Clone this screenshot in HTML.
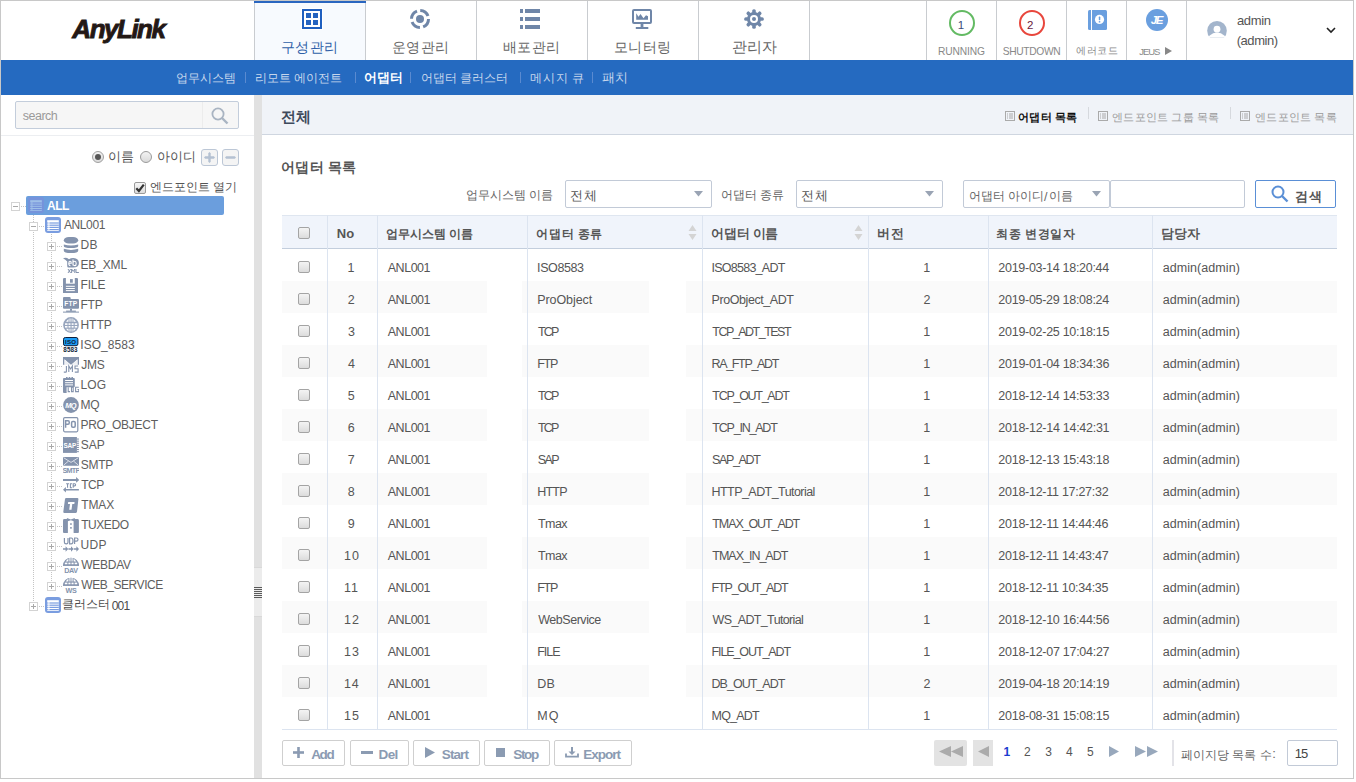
<!DOCTYPE html>
<html><head><meta charset="utf-8"><title>AnyLink</title><style>
*{margin:0;padding:0}
html,body{width:1356px;height:782px;overflow:hidden;background:#fff;font-family:"Liberation Sans", sans-serif}
#root{position:relative;width:1356px;height:782px}
#root div{position:absolute;white-space:nowrap}
svg{display:block}
.k{-webkit-text-stroke:0.25px currentColor}
</style></head>
<body><div id="root">
<div style="left:0px;top:0px;width:1354px;height:1px;background:#c8c8c8;"></div>
<div style="left:0px;top:0px;width:1px;height:779px;background:#c8c8c8;"></div>
<div style="left:1353px;top:0px;width:1px;height:779px;background:#c8c8c8;"></div>
<div style="left:0px;top:778px;width:1354px;height:1px;background:#c8c8c8;"></div>
<div style="left:72.35px;top:16px;font-size:26px;line-height:26px;color:#231815;font-weight:bold;font-style:italic;letter-spacing:-1.49px;-webkit-text-stroke:0.9px #231815;">AnyLink</div>
<div style="left:254px;top:1px;width:112px;height:59px;background:#f7fafe;box-sizing:border-box;border-left:1px solid #c9ccd0;border-right:1px solid #c9ccd0"></div>
<div style="left:254px;top:1px;width:112px;height:2px;background:#2a66c0;"></div>
<div style="left:301px;top:8px"><svg width="22" height="22" viewBox="-1 -1 22 22"><rect x="-1" y="-1" width="22" height="22" fill="#fff"/><rect x="1" y="1" width="18" height="18" fill="none" stroke="#1f5fbf" stroke-width="2"/><rect x="4" y="4" width="5" height="5" fill="#2563bf"/><rect x="11" y="4" width="5" height="5" fill="#2563bf"/><rect x="4" y="11" width="5" height="5" fill="#2563bf"/><rect x="11" y="11" width="5" height="5" fill="#2563bf"/></svg></div>
<div class="k" style="left:280.85px;top:38px;font-size:19px;line-height:19px;color:#2e5fa8;">구성관리</div>
<div style="left:476px;top:1px;width:1px;height:59px;background:#c9ccd0;"></div>
<div style="left:410px;top:9px"><svg width="20" height="20" viewBox="0 0 20 20"><circle cx="10" cy="10" r="8.5" fill="none" stroke="#6f86a8" stroke-width="3" stroke-dasharray="10.05 3.3"/><circle cx="10" cy="10" r="4" fill="#6f86a8"/></svg></div>
<div class="k" style="left:391.85px;top:38px;font-size:19px;line-height:19px;color:#666;">운영관리</div>
<div style="left:587px;top:1px;width:1px;height:59px;background:#c9ccd0;"></div>
<div style="left:520px;top:9px"><svg width="20" height="20" viewBox="0 0 20 20"><rect x="0" y="0" width="3" height="4" fill="#6f86a8"/><rect x="5" y="0" width="15" height="4" fill="#6f86a8"/><rect x="0" y="8" width="3" height="4" fill="#6f86a8"/><rect x="5" y="8" width="15" height="4" fill="#6f86a8"/><rect x="0" y="16" width="3" height="4" fill="#6f86a8"/><rect x="5" y="16" width="15" height="4" fill="#6f86a8"/></svg></div>
<div class="k" style="left:502.85px;top:38px;font-size:19px;line-height:19px;color:#666;">배포관리</div>
<div style="left:698px;top:1px;width:1px;height:59px;background:#c9ccd0;"></div>
<div style="left:632px;top:9px"><svg width="20" height="20" viewBox="0 0 20 20"><rect x="1" y="1" width="18" height="13" rx="1" fill="none" stroke="#6f86a8" stroke-width="2"/><path d="M4.2 4.2 L6.5 7.8 L8.5 5 L11.5 9.3 L14 6.2 L16 7.3 V10.7 H4.2Z" fill="#6f86a8"/><rect x="8.6" y="14.5" width="2.8" height="3.5" fill="#6f86a8"/><rect x="3.8" y="18" width="12.5" height="2" fill="#6f86a8"/></svg></div>
<div class="k" style="left:613.85px;top:38px;font-size:19px;line-height:19px;color:#666;">모니터링</div>
<div style="left:809px;top:1px;width:1px;height:59px;background:#c9ccd0;"></div>
<div style="left:744px;top:9px"><svg width="20" height="20" viewBox="0 0 20 20"><g fill="#6f86a8"><circle cx="10" cy="10" r="7"/><g id="th"><rect x="8.2" y="0.2" width="3.6" height="5" rx="1.6"/><rect x="8.2" y="14.8" width="3.6" height="5" rx="1.6"/></g><use href="#th" transform="rotate(45 10 10)"/><use href="#th" transform="rotate(90 10 10)"/><use href="#th" transform="rotate(135 10 10)"/></g><circle cx="10" cy="10" r="4" fill="#fff"/><circle cx="10" cy="10" r="2" fill="#6f86a8"/></svg></div>
<div class="k" style="left:731.55px;top:38px;font-size:19.5px;line-height:19.5px;color:#666;">관리자</div>
<div style="left:926px;top:1px;width:1px;height:59px;background:#c9ccd0;"></div>
<div style="left:996px;top:1px;width:1px;height:59px;background:#c9ccd0;"></div>
<div style="left:1066px;top:1px;width:1px;height:59px;background:#c9ccd0;"></div>
<div style="left:1126px;top:1px;width:1px;height:59px;background:#c9ccd0;"></div>
<div style="left:1186px;top:1px;width:1px;height:59px;background:#c9ccd0;"></div>
<div style="left:949px;top:10px;width:22px;height:22px;border:2px solid #63ba63;border-radius:50%"></div>
<div style="left:957.82px;top:20px;font-size:11.5px;line-height:11.5px;color:#3a4a7a;">1</div>
<div style="left:1019px;top:10px;width:22px;height:22px;border:2px solid #e8463c;border-radius:50%"></div>
<div style="left:1026.92px;top:20px;font-size:11.5px;line-height:11.5px;color:#6a1a40;">2</div>
<div style="left:937.96px;top:47px;font-size:10.25px;line-height:10.25px;color:#888;letter-spacing:-0.13px;">RUNNING</div>
<div style="left:1002.74px;top:47px;font-size:10.25px;line-height:10.25px;color:#888;letter-spacing:-0.34px;">SHUTDOWN</div>
<svg style="position:absolute;left:1088px;top:10px" width="19" height="20" viewBox="0 0 19 20"><path d="M1.5 0H3V20H1.5Q0 20 0 18.5V1.5Q0 0 1.5 0Z" fill="#6a9fdf"/><path d="M4 0H17.5Q19 0 19 1.5V18.5Q19 20 17.5 20H4Z" fill="#6a9fdf"/><circle cx="11.5" cy="9.4" r="4.6" fill="#fff"/><rect x="10.8" y="6.6" width="1.5" height="3.6" rx="0.6" fill="#6a9fdf"/><rect x="10.8" y="11.1" width="1.5" height="1.4" fill="#6a9fdf"/></svg>
<div class="k" style="left:1075.62px;top:44px;font-size:13.75px;line-height:13.75px;color:#888;">에러코드</div>
<div style="left:1146px;top:9px;width:22px;height:22px;border-radius:50%;background:#6a9fdf"></div>
<div style="left:1150.73px;top:15px;font-size:11.5px;line-height:11.5px;color:#fff;font-weight:bold;font-style:italic;letter-spacing:-1.34px;">JE</div>
<div style="left:1139.15px;top:47px;font-size:9.5px;line-height:9.5px;color:#888;letter-spacing:-1px;">JEUS</div>
<svg style="position:absolute;left:1165px;top:47px" width="7" height="8" viewBox="0 0 7 8"><path d="M0 0L7 4L0 8Z" fill="#888"/></svg>
<svg style="position:absolute;left:1207px;top:21px" width="20" height="18" viewBox="0 0 20 18"><defs><clipPath id="cav"><rect x="0" y="0" width="20" height="16.6"/></clipPath></defs><g clip-path="url(#cav)"><circle cx="10" cy="9.8" r="9.8" fill="#a3b5cc"/><circle cx="10" cy="8.2" r="3.4" fill="#fff"/><circle cx="10" cy="21.6" r="10.2" fill="#fff"/></g></svg>
<div style="left:1236.95px;top:14px;font-size:13px;line-height:13px;color:#555;letter-spacing:-0.33px;">admin</div>
<div style="left:1236.69px;top:34px;font-size:13px;line-height:13px;color:#555;letter-spacing:-0.44px;">(admin)</div>
<svg style="position:absolute;left:1326px;top:27px" width="10" height="7" viewBox="0 0 10 7"><path d="M1 1L5 5L9 1" stroke="#222" stroke-width="1.6" fill="none"/></svg>
<div style="left:1px;top:60px;width:1352px;height:35px;background:#256ac0;"></div>
<div class="k" style="left:175.67px;top:70px;font-size:16.25px;line-height:16.25px;color:#c6d6ec;">업무시스템</div>
<div class="k" style="left:255.17px;top:70px;font-size:16.25px;line-height:16.25px;color:#c6d6ec;">리모트 에이전트</div>
<div class="k" style="left:363.92px;top:71px;font-size:16.75px;line-height:16.75px;color:#fff;font-weight:bold;">어댑터</div>
<div class="k" style="left:420.87px;top:70px;font-size:16.25px;line-height:16.25px;color:#c6d6ec;">어댑터 클러스터</div>
<div class="k" style="left:530.15px;top:70px;font-size:16.5px;line-height:16.5px;color:#c6d6ec;">메시지 큐</div>
<div class="k" style="left:602px;top:70px;font-size:17px;line-height:17px;color:#c6d6ec;">패치</div>
<div style="left:245px;top:72px;width:1px;height:11px;background:#5a8ad0;"></div>
<div style="left:355px;top:72px;width:1px;height:11px;background:#5a8ad0;"></div>
<div style="left:410px;top:72px;width:1px;height:11px;background:#5a8ad0;"></div>
<div style="left:520px;top:72px;width:1px;height:11px;background:#5a8ad0;"></div>
<div style="left:592px;top:72px;width:1px;height:11px;background:#5a8ad0;"></div>
<div style="left:15px;top:101px;width:222px;height:26px;border:1px solid #c3cddb;background:#f6f6f6;border-radius:2px;"></div>
<div style="left:202px;top:102px;width:1px;height:26px;background:#ececec;"></div>
<div style="left:22.65px;top:110px;font-size:12.5px;line-height:12.5px;color:#9a9a9a;letter-spacing:-0.47px;">search</div>
<svg style="position:absolute;left:211px;top:107px" width="18" height="18" viewBox="0 0 18 18"><circle cx="7" cy="7" r="5.6" fill="none" stroke="#a9b4c2" stroke-width="1.8"/><path d="M11 11L16.5 16.5" stroke="#a9b4c2" stroke-width="2.4"/></svg>
<div style="left:1px;top:135px;width:253px;height:1px;background:#eceef1;"></div>
<div style="left:92px;top:151px;width:10px;height:10px;border:1px solid #a0a0a0;border-radius:50%;background:linear-gradient(#f3f3f3,#dadada)"></div>
<div style="left:95px;top:154px;width:6px;height:6px;border-radius:50%;background:#555"></div>
<div class="k" style="left:108.27px;top:149px;font-size:17.25px;line-height:17.25px;color:#555;">이름</div>
<div style="left:140px;top:151px;width:10px;height:10px;border:1px solid #9a9a9a;border-radius:50%;background:linear-gradient(#f3f3f3,#dadada)"></div>
<div class="k" style="left:156.62px;top:150px;font-size:16.75px;line-height:16.75px;color:#555;">아이디</div>
<div style="left:201px;top:149px;width:15px;height:15px;border:1px solid #bcc7d6;background:#f4f4f4;border-radius:3px;"></div>
<svg style="position:absolute;left:204px;top:152px" width="11" height="11" viewBox="0 0 11 11"><path d="M0 5.5 L1.2 4.3 H9.8 L11 5.5 L9.8 6.7 H1.2Z" fill="#b4c1d2"/><path d="M5.5 0 L6.7 1.2 V9.8 L5.5 11 L4.3 9.8 V1.2Z" fill="#b4c1d2"/></svg>
<div style="left:222px;top:149px;width:15px;height:15px;border:1px solid #bcc7d6;background:#f4f4f4;border-radius:3px;"></div>
<svg style="position:absolute;left:225px;top:152px" width="11" height="11" viewBox="0 0 11 11"><path d="M0 5.5 L1.2 4.3 H9.8 L11 5.5 L9.8 6.7 H1.2Z" fill="#b4c1d2"/></svg>
<div style="left:134px;top:182px;width:10px;height:10px;border:1px solid #9a9a9a;border-radius:2px;background:linear-gradient(#f6f6f6,#dcdcdc)"></div>
<svg style="position:absolute;left:135px;top:183px" width="10" height="10" viewBox="0 0 10 10"><path d="M1.3 5.2L3.9 8L8.8 1.6" stroke="#333" stroke-width="2.2" fill="none"/></svg>
<div class="k" style="left:150px;top:180px;font-size:16px;line-height:16px;color:#555;">엔드포인트 열기</div>
<div style="left:26px;top:196px;width:198px;height:19px;background:#6b9edd;border-radius:2px;"></div>
<div style="left:11px;top:202px;width:7px;height:7px;border:1px solid #d3d3d3;background:#fff;"></div><div style="left:13px;top:206px;width:5px;height:1px;background:#a8a8a8;"></div>
<div style="left:21px;top:206px;width:5px;height:1px;background-image:linear-gradient(90deg,#c4c4c4 50%, transparent 50%);background-size:2px 1px"></div>
<div style="left:28px;top:197px;opacity:0.35"><svg width="16" height="16" viewBox="0 0 16 16" ><rect x="0" y="0" width="16" height="16" rx="3" fill="#8a7fd8"/><rect x="2.2" y="3.2" width="11.6" height="10.6" fill="#fff"/><rect x="4.4" y="5.4" width="9.4" height="1.2" fill="#8a7fd8"/><rect x="4.4" y="7.6" width="9.4" height="1.2" fill="#8a7fd8"/><rect x="4.4" y="9.8" width="9.4" height="1.2" fill="#8a7fd8"/><rect x="4.4" y="12" width="9.4" height="1" fill="#8a7fd8"/><rect x="2.2" y="5.4" width="1.2" height="1.2" fill="#8a7fd8"/><rect x="2.2" y="7.6" width="1.2" height="1.2" fill="#8a7fd8"/><rect x="2.2" y="9.8" width="1.2" height="1.2" fill="#8a7fd8"/><rect x="2.2" y="12" width="1.2" height="1" fill="#8a7fd8"/></svg></div>
<div style="left:46.9px;top:200px;font-size:12px;line-height:12px;color:#fff;font-weight:bold;letter-spacing:-0.43px;">ALL</div>
<div style="left:33px;top:215px;width:1px;height:7px;background-image:linear-gradient(#c4c4c4 50%, transparent 50%);background-size:1px 2px"></div>
<div style="left:29px;top:222px;width:7px;height:7px;border:1px solid #d3d3d3;background:#fff;"></div><div style="left:31px;top:226px;width:5px;height:1px;background:#a8a8a8;"></div>
<div style="left:39px;top:226px;width:6px;height:1px;background-image:linear-gradient(90deg,#c4c4c4 50%, transparent 50%);background-size:2px 1px"></div>
<div style="left:45px;top:217px"><svg width="16" height="16" viewBox="0 0 16 16" ><rect x="0" y="0" width="16" height="16" rx="3" fill="#7a9de0"/><rect x="2.2" y="3.2" width="11.6" height="10.6" fill="#fff"/><rect x="4.4" y="5.4" width="9.4" height="1.2" fill="#7a9de0"/><rect x="4.4" y="7.6" width="9.4" height="1.2" fill="#7a9de0"/><rect x="4.4" y="9.8" width="9.4" height="1.2" fill="#7a9de0"/><rect x="4.4" y="12" width="9.4" height="1" fill="#7a9de0"/><rect x="2.2" y="5.4" width="1.2" height="1.2" fill="#7a9de0"/><rect x="2.2" y="7.6" width="1.2" height="1.2" fill="#7a9de0"/><rect x="2.2" y="9.8" width="1.2" height="1.2" fill="#7a9de0"/><rect x="2.2" y="12" width="1.2" height="1" fill="#7a9de0"/></svg></div>
<div style="left:63.88px;top:219px;font-size:12px;line-height:12px;color:#5e5e5e;letter-spacing:-0.37px;">ANL001</div>
<div style="left:33px;top:232px;width:1px;height:370px;background-image:linear-gradient(#c4c4c4 50%, transparent 50%);background-size:1px 2px"></div>
<div style="left:51px;top:234px;width:1px;height:356px;background-image:linear-gradient(#c4c4c4 50%, transparent 50%);background-size:1px 2px"></div>
<div style="left:47px;top:242px;width:7px;height:7px;border:1px solid #d3d3d3;background:#fff;"></div><div style="left:49px;top:246px;width:5px;height:1px;background:#a8a8a8;"></div><div style="left:51px;top:244px;width:1px;height:5px;background:#a8a8a8;"></div>
<div style="left:57px;top:246px;width:5px;height:1px;background-image:linear-gradient(90deg,#c4c4c4 50%, transparent 50%);background-size:2px 1px"></div>
<div style="left:63px;top:237px;width:16px;height:16px"><svg width="16" height="16" viewBox="0 0 16 16" ><rect x="0.8" y="0" width="14.4" height="6.4" rx="5" ry="3.2" fill="#8493ad"/><path d="M0.8 7.4 Q8 9.6 15.2 7.4 V9 Q15.2 11 8 11 Q0.8 11 0.8 9Z" fill="#8493ad"/><path d="M0.8 11.8 Q8 14 15.2 11.8 V13.7 Q15.2 16 8 16 Q0.8 16 0.8 13.7Z" fill="#8493ad"/></svg></div>
<div style="left:80.42px;top:239px;font-size:12px;line-height:12px;color:#5e5e5e;letter-spacing:0.35px;">DB</div>
<div style="left:47px;top:262px;width:7px;height:7px;border:1px solid #d3d3d3;background:#fff;"></div><div style="left:49px;top:266px;width:5px;height:1px;background:#a8a8a8;"></div><div style="left:51px;top:264px;width:1px;height:5px;background:#a8a8a8;"></div>
<div style="left:57px;top:266px;width:5px;height:1px;background-image:linear-gradient(90deg,#c4c4c4 50%, transparent 50%);background-size:2px 1px"></div>
<div style="left:63px;top:257px;width:16px;height:16px"><svg width="16" height="16" viewBox="0 0 16 16" ><path d="M0 1.3 Q3 0 6 2.2 Q8 0.8 10.5 1 Q15.9 1.3 15.9 6 Q15.9 10.5 10 10.5 H5.5 Q4.2 10.5 4.2 9 V4.5 Q2.5 2.5 0 1.3Z" fill="#8493ad"/><path d="M8.3 6.2 H5.8 Q5.9 4.3 7 4.3 Q8.3 4.3 8.3 6.2Z M5.8 6.4 Q5.8 8.6 7.4 8.6" stroke="#fff" stroke-width="1.1" fill="none"/><path d="M10 2.5 V8.6 M10 5.5 Q10.5 4.3 11.8 4.3 Q13.2 4.3 13.2 6.4 Q13.2 8.6 11.8 8.6 Q10.5 8.6 10 7.4" stroke="#fff" stroke-width="1.1" fill="none"/><path d="M5 12 L7.6 16 M7.6 12 L5 16 M8.6 16 V12 L10.2 14.4 L11.8 12 V16 M13 12 V15.5 H15.9" stroke="#8493ad" stroke-width="1" fill="none"/></svg></div>
<div style="left:80.42px;top:259px;font-size:12px;line-height:12px;color:#5e5e5e;letter-spacing:-0.13px;">EB_XML</div>
<div style="left:47px;top:282px;width:7px;height:7px;border:1px solid #d3d3d3;background:#fff;"></div><div style="left:49px;top:286px;width:5px;height:1px;background:#a8a8a8;"></div><div style="left:51px;top:284px;width:1px;height:5px;background:#a8a8a8;"></div>
<div style="left:57px;top:286px;width:5px;height:1px;background-image:linear-gradient(90deg,#c4c4c4 50%, transparent 50%);background-size:2px 1px"></div>
<div style="left:63px;top:278px;width:16px;height:16px"><svg width="16" height="16" viewBox="0 0 16 16" ><path d="M0.8 0 H14.2 L15 0.8 V15 H0 V0.8Z" fill="#8493ad"/><rect x="2.9" y="0" width="8.9" height="5.7" fill="#fff"/><rect x="7" y="1.1" width="2.8" height="3.6" fill="#8493ad"/><rect x="2.9" y="7.8" width="8.9" height="1" fill="#fff"/><rect x="2.9" y="10" width="8.9" height="1" fill="#fff"/><rect x="2.9" y="12.1" width="8.9" height="1" fill="#fff"/></svg></div>
<div style="left:80.42px;top:279px;font-size:12px;line-height:12px;color:#5e5e5e;letter-spacing:-0.11px;">FILE</div>
<div style="left:47px;top:302px;width:7px;height:7px;border:1px solid #d3d3d3;background:#fff;"></div><div style="left:49px;top:306px;width:5px;height:1px;background:#a8a8a8;"></div><div style="left:51px;top:304px;width:1px;height:5px;background:#a8a8a8;"></div>
<div style="left:57px;top:306px;width:5px;height:1px;background-image:linear-gradient(90deg,#c4c4c4 50%, transparent 50%);background-size:2px 1px"></div>
<div style="left:63px;top:297px;width:16px;height:16px"><svg width="16" height="16" viewBox="0 0 16 16" ><path d="M0 1 Q0 0 1 0 H6.5 Q7.7 0 7.7 1.2 V2 H15 Q16 2 16 3 V10.8 Q16 11.8 15 11.8 H1 Q0 11.8 0 10.8Z" fill="#8493ad"/><text x="7.8" y="8.9" font-size="6.6" font-weight="bold" fill="#fff" text-anchor="middle" font-family="Liberation Sans" letter-spacing="0.2">FTP</text><rect x="7" y="11.8" width="2" height="2" fill="#8493ad"/><rect x="3.1" y="13.6" width="9.8" height="1.2" fill="#8493ad"/><rect x="0" y="14.6" width="16" height="1" fill="#8493ad"/></svg></div>
<div style="left:80.42px;top:299px;font-size:12px;line-height:12px;color:#5e5e5e;letter-spacing:-0.17px;">FTP</div>
<div style="left:47px;top:322px;width:7px;height:7px;border:1px solid #d3d3d3;background:#fff;"></div><div style="left:49px;top:326px;width:5px;height:1px;background:#a8a8a8;"></div><div style="left:51px;top:324px;width:1px;height:5px;background:#a8a8a8;"></div>
<div style="left:57px;top:326px;width:5px;height:1px;background-image:linear-gradient(90deg,#c4c4c4 50%, transparent 50%);background-size:2px 1px"></div>
<div style="left:63px;top:317px;width:16px;height:16px"><svg width="16" height="16" viewBox="0 0 16 16" ><defs><clipPath id="gc"><circle cx="8" cy="8" r="7.9"/></clipPath></defs><circle cx="8" cy="8" r="7.9" fill="#97a5bd"/><g clip-path="url(#gc)" fill="#fff"><rect x="2" y="6.3" width="2.5" height="1.6"/><rect x="5.5" y="6.3" width="2" height="1.6"/><rect x="8.6" y="6.3" width="2" height="1.6"/><rect x="11.7" y="6.3" width="2.5" height="1.6"/><rect x="2" y="9" width="2.5" height="1.6"/><rect x="5.5" y="9" width="2" height="1.6"/><rect x="8.6" y="9" width="2" height="1.6"/><rect x="11.7" y="9" width="2.5" height="1.6"/><path d="M3 4.8 L5.5 2 V4.8Z M6.5 4.8 V1.5 H7.5 V4.8Z M8.6 4.8 V1.5 H9.5 V4.8Z M10.5 4.8 V2 L13 4.8Z"/><path d="M3 11.8 L5.5 14.5 V11.8Z M6.5 11.8 V14.5 H7.5 V11.8Z M8.6 11.8 V14.5 H9.5 V11.8Z M10.5 11.8 V14.5 L13 11.8Z"/></g></svg></div>
<div style="left:80.42px;top:319px;font-size:12px;line-height:12px;color:#5e5e5e;">HTTP</div>
<div style="left:47px;top:342px;width:7px;height:7px;border:1px solid #d3d3d3;background:#fff;"></div><div style="left:49px;top:346px;width:5px;height:1px;background:#a8a8a8;"></div><div style="left:51px;top:344px;width:1px;height:5px;background:#a8a8a8;"></div>
<div style="left:57px;top:346px;width:5px;height:1px;background-image:linear-gradient(90deg,#c4c4c4 50%, transparent 50%);background-size:2px 1px"></div>
<div style="left:63px;top:337px;width:16px;height:16px"><svg width="16" height="16" viewBox="0 0 16 16" ><rect x="0.5" y="0.5" width="14.4" height="8.2" rx="1.8" fill="#1c9cf6" stroke="#0f1f3a" stroke-width="1"/><text x="7.7" y="7.2" font-size="6.2" font-weight="bold" fill="#0f1f3a" text-anchor="middle" font-family="Liberation Sans" letter-spacing="0.3">ISO</text><text x="7.5" y="15" font-size="6.3" font-weight="bold" fill="#0f1f3a" text-anchor="middle" font-family="Liberation Sans" letter-spacing="0.1">8583</text></svg></div>
<div style="left:80.29px;top:339px;font-size:12px;line-height:12px;color:#5e5e5e;letter-spacing:0.04px;">ISO_8583</div>
<div style="left:47px;top:362px;width:7px;height:7px;border:1px solid #d3d3d3;background:#fff;"></div><div style="left:49px;top:366px;width:5px;height:1px;background:#a8a8a8;"></div><div style="left:51px;top:364px;width:1px;height:5px;background:#a8a8a8;"></div>
<div style="left:57px;top:366px;width:5px;height:1px;background-image:linear-gradient(90deg,#c4c4c4 50%, transparent 50%);background-size:2px 1px"></div>
<div style="left:63px;top:357px;width:16px;height:16px"><svg width="16" height="16" viewBox="0 0 16 16" ><path d="M0 0H16V7.7H14.5V2.2L8 7.7L1.5 2.2V7.7H0Z" fill="#8493ad"/><path d="M1.5 1.6H14.5L8 7.3Z" fill="#8493ad"/><path d="M1.5 2.6V7.7H7.3Z M14.5 2.6V7.7H8.7Z" fill="#eef0f4"/><path d="M3.4 9 V14.4 Q3.4 15.1 2.7 15.1 H0.8 M5.8 15.1 V9 L7.6 12 L9.4 9 V15.1 M15.1 9 H12 V11.8 H15.1 V15.1 H11.8" stroke="#8493ad" stroke-width="1.1" fill="none"/></svg></div>
<div style="left:81.21px;top:359px;font-size:12px;line-height:12px;color:#5e5e5e;letter-spacing:-0.23px;">JMS</div>
<div style="left:47px;top:382px;width:7px;height:7px;border:1px solid #d3d3d3;background:#fff;"></div><div style="left:49px;top:386px;width:5px;height:1px;background:#a8a8a8;"></div><div style="left:51px;top:384px;width:1px;height:5px;background:#a8a8a8;"></div>
<div style="left:57px;top:386px;width:5px;height:1px;background-image:linear-gradient(90deg,#c4c4c4 50%, transparent 50%);background-size:2px 1px"></div>
<div style="left:63px;top:377px;width:16px;height:16px"><svg width="16" height="16" viewBox="0 0 16 16" ><rect x="0" y="1" width="11.8" height="9.2" rx="1" fill="#8493ad"/><path d="M0 9 H3.6 V16 H1 Q0 16 0 15Z" fill="#8493ad"/><rect x="3" y="0" width="1.6" height="1.2" fill="#8493ad"/><rect x="5.7" y="0" width="1.6" height="1.2" fill="#8493ad"/><rect x="8.4" y="0" width="1.6" height="1.2" fill="#8493ad"/><rect x="2.1" y="3" width="7.9" height="1" fill="#fff"/><rect x="2.1" y="5.2" width="7.9" height="1" fill="#fff"/><rect x="2.1" y="7.4" width="7.9" height="1" fill="#fff"/><path d="M5.2 10.2 V14.6 H7 M8.5 10.2 H10.2 V14.6 H8.5Z M15.8 10.2 H12.6 V14.6 H15.8 V12.5 H14.5" stroke="#8493ad" stroke-width="1.1" fill="none"/></svg></div>
<div style="left:80.42px;top:379px;font-size:12px;line-height:12px;color:#5e5e5e;letter-spacing:0.22px;">LOG</div>
<div style="left:47px;top:402px;width:7px;height:7px;border:1px solid #d3d3d3;background:#fff;"></div><div style="left:49px;top:406px;width:5px;height:1px;background:#a8a8a8;"></div><div style="left:51px;top:404px;width:1px;height:5px;background:#a8a8a8;"></div>
<div style="left:57px;top:406px;width:5px;height:1px;background-image:linear-gradient(90deg,#c4c4c4 50%, transparent 50%);background-size:2px 1px"></div>
<div style="left:63px;top:397px;width:16px;height:16px"><svg width="16" height="16" viewBox="0 0 16 16" ><circle cx="8" cy="8" r="7.9" fill="#8493ad"/><text x="7.6" y="10.8" font-size="7.4" font-weight="bold" font-style="italic" fill="#fff" text-anchor="middle" font-family="Liberation Sans" letter-spacing="-0.6">MQ</text></svg></div>
<div style="left:80.42px;top:399px;font-size:12px;line-height:12px;color:#5e5e5e;letter-spacing:-0.07px;">MQ</div>
<div style="left:47px;top:422px;width:7px;height:7px;border:1px solid #d3d3d3;background:#fff;"></div><div style="left:49px;top:426px;width:5px;height:1px;background:#a8a8a8;"></div><div style="left:51px;top:424px;width:1px;height:5px;background:#a8a8a8;"></div>
<div style="left:57px;top:426px;width:5px;height:1px;background-image:linear-gradient(90deg,#c4c4c4 50%, transparent 50%);background-size:2px 1px"></div>
<div style="left:63px;top:417px;width:16px;height:16px"><svg width="16" height="16" viewBox="0 0 16 16" ><rect x="0.6" y="0.6" width="14.2" height="14.2" rx="1.2" fill="#fff" stroke="#8493ad" stroke-width="1.2"/><path d="M2.6 10.7 V3.8 H5 Q6.3 3.8 6.3 5.5 Q6.3 7.3 5 7.3 H2.6" stroke="#8493ad" stroke-width="1.5" fill="none"/><rect x="8.6" y="4.4" width="3.6" height="5.8" rx="1.2" stroke="#8493ad" stroke-width="1.5" fill="none"/></svg></div>
<div style="left:80.42px;top:419px;font-size:12px;line-height:12px;color:#5e5e5e;letter-spacing:-0.26px;">PRO_OBJECT</div>
<div style="left:47px;top:442px;width:7px;height:7px;border:1px solid #d3d3d3;background:#fff;"></div><div style="left:49px;top:446px;width:5px;height:1px;background:#a8a8a8;"></div><div style="left:51px;top:444px;width:1px;height:5px;background:#a8a8a8;"></div>
<div style="left:57px;top:446px;width:5px;height:1px;background-image:linear-gradient(90deg,#c4c4c4 50%, transparent 50%);background-size:2px 1px"></div>
<div style="left:63px;top:437px;width:16px;height:16px"><svg width="16" height="16" viewBox="0 0 16 16" ><rect x="0" y="0" width="13.9" height="15.9" fill="#8493ad"/><rect x="13.9" y="1.5" width="2" height="1.1" fill="#8493ad"/><rect x="13.9" y="3.6" width="2" height="1.1" fill="#8493ad"/><rect x="13.9" y="5.7" width="2" height="1.1" fill="#8493ad"/><rect x="13.9" y="7.8" width="2" height="1.1" fill="#8493ad"/><rect x="13.9" y="9.9" width="2" height="1.1" fill="#8493ad"/><rect x="13.9" y="12" width="2" height="1.1" fill="#8493ad"/><rect x="13.9" y="14.1" width="2" height="1.1" fill="#8493ad"/><text x="6.8" y="11" font-size="6.4" font-weight="bold" fill="#fff" text-anchor="middle" font-family="Liberation Sans" letter-spacing="-0.2">SAP</text></svg></div>
<div style="left:80.86px;top:439px;font-size:12px;line-height:12px;color:#5e5e5e;letter-spacing:-0.02px;">SAP</div>
<div style="left:47px;top:462px;width:7px;height:7px;border:1px solid #d3d3d3;background:#fff;"></div><div style="left:49px;top:466px;width:5px;height:1px;background:#a8a8a8;"></div><div style="left:51px;top:464px;width:1px;height:5px;background:#a8a8a8;"></div>
<div style="left:57px;top:466px;width:5px;height:1px;background-image:linear-gradient(90deg,#c4c4c4 50%, transparent 50%);background-size:2px 1px"></div>
<div style="left:63px;top:457px;width:16px;height:16px"><svg width="16" height="16" viewBox="0 0 16 16" ><rect x="0" y="0" width="16" height="8.7" rx="0.8" fill="#8493ad"/><path d="M0.8 0.8 L8 5.4 L15.2 0.8 M0.8 8 L5.6 4 M15.2 8 L10.4 4" stroke="#e3e7ef" stroke-width="0.9" fill="none"/><text x="8" y="15.9" font-size="7.2" font-weight="bold" fill="#8493ad" text-anchor="middle" font-family="Liberation Sans" letter-spacing="-0.7">SMTP</text></svg></div>
<div style="left:80.86px;top:459px;font-size:12px;line-height:12px;color:#5e5e5e;letter-spacing:-0.35px;">SMTP</div>
<div style="left:47px;top:482px;width:7px;height:7px;border:1px solid #d3d3d3;background:#fff;"></div><div style="left:49px;top:486px;width:5px;height:1px;background:#a8a8a8;"></div><div style="left:51px;top:484px;width:1px;height:5px;background:#a8a8a8;"></div>
<div style="left:57px;top:486px;width:5px;height:1px;background-image:linear-gradient(90deg,#c4c4c4 50%, transparent 50%);background-size:2px 1px"></div>
<div style="left:63px;top:477px;width:16px;height:16px"><svg width="16" height="16" viewBox="0 0 16 16" ><path d="M0 2.1 H13.1 V0 L16.2 3 L13.1 5.7 V3.9 H0Z" fill="#8493ad"/><path d="M15.9 12.1 H2.9 V10 L0 12.8 L2.9 15.6 V13.6 H15.9Z" fill="#8493ad"/><path d="M3.1 6.7 H6 M4.55 6.7 V10.8 M9 6.7 H7.4 V10.8 H9 M10.2 10.8 V6.7 H11.8 Q12.6 6.7 12.6 7.8 Q12.6 8.9 11.8 8.9 H10.2" stroke="#8493ad" stroke-width="1.1" fill="none"/></svg></div>
<div style="left:81.13px;top:479px;font-size:12px;line-height:12px;color:#5e5e5e;letter-spacing:-0.4px;">TCP</div>
<div style="left:47px;top:502px;width:7px;height:7px;border:1px solid #d3d3d3;background:#fff;"></div><div style="left:49px;top:506px;width:5px;height:1px;background:#a8a8a8;"></div><div style="left:51px;top:504px;width:1px;height:5px;background:#a8a8a8;"></div>
<div style="left:57px;top:506px;width:5px;height:1px;background-image:linear-gradient(90deg,#c4c4c4 50%, transparent 50%);background-size:2px 1px"></div>
<div style="left:63px;top:497px;width:16px;height:16px"><svg width="16" height="16" viewBox="0 0 16 16" ><path d="M3.3 1 H14.4 Q15.5 1 15.4 2.1 L14 14.8 Q13.9 15.9 12.8 15.9 H1.4 Q0.2 15.9 0.3 14.8 L2 2.1 Q2.1 1 3.3 1Z" fill="#8493ad"/><path d="M5.2 5.1 H11.6 L11.3 6.9 H9.3 L8.5 12.8 H6.2 L7 6.9 H4.9Z" fill="#fff"/></svg></div>
<div style="left:81.13px;top:499px;font-size:12px;line-height:12px;color:#5e5e5e;letter-spacing:-0.04px;">TMAX</div>
<div style="left:47px;top:522px;width:7px;height:7px;border:1px solid #d3d3d3;background:#fff;"></div><div style="left:49px;top:526px;width:5px;height:1px;background:#a8a8a8;"></div><div style="left:51px;top:524px;width:1px;height:5px;background:#a8a8a8;"></div>
<div style="left:57px;top:526px;width:5px;height:1px;background-image:linear-gradient(90deg,#c4c4c4 50%, transparent 50%);background-size:2px 1px"></div>
<div style="left:63px;top:517px;width:16px;height:16px"><svg width="16" height="16" viewBox="0 0 16 16" ><path d="M1.3 2.1 H4.9 V15.9 H1 Q0 15.9 0 14.9 V3.4 Q0 2.1 1.3 2.1Z" fill="#8493ad"/><path d="M14.6 2.1 H10.6 V15.9 H15 Q15.9 15.9 15.9 14.9 V3.4 Q15.9 2.1 14.6 2.1Z" fill="#8493ad"/><path d="M3.9 1.1 L7.8 2.6 L11.8 1.1 V4.6 L7.8 3.2 L3.9 4.6Z" fill="#8493ad"/><rect x="7.2" y="6.2" width="1.5" height="1.7" fill="#8493ad"/><rect x="7.2" y="10" width="1.5" height="1.7" fill="#8493ad"/></svg></div>
<div style="left:81.13px;top:519px;font-size:12px;line-height:12px;color:#5e5e5e;letter-spacing:-0.43px;">TUXEDO</div>
<div style="left:47px;top:542px;width:7px;height:7px;border:1px solid #d3d3d3;background:#fff;"></div><div style="left:49px;top:546px;width:5px;height:1px;background:#a8a8a8;"></div><div style="left:51px;top:544px;width:1px;height:5px;background:#a8a8a8;"></div>
<div style="left:57px;top:546px;width:5px;height:1px;background-image:linear-gradient(90deg,#c4c4c4 50%, transparent 50%);background-size:2px 1px"></div>
<div style="left:63px;top:537px;width:16px;height:16px"><svg width="16" height="16" viewBox="0 0 16 16" ><path d="M1.4 1 V5.2 Q1.4 6.9 3.2 6.9 Q5 6.9 5 5.2 V1 M6.6 6.9 V1 H8.2 Q10 1 10 3.95 Q10 6.9 8.2 6.9Z M11.6 6.9 V1 H13.4 Q15 1 15 2.6 Q15 4.2 13.4 4.2 H11.6" stroke="#8493ad" stroke-width="1.2" fill="none"/><path d="M0 11.2 H2.6 V9.2 L5.2 12 L2.6 14.8 V12.8 H0Z" fill="#8493ad"/><path d="M5.4 11.2 H8.0 V9.2 L10.600000000000001 12 L8.0 14.8 V12.8 H5.4Z" fill="#8493ad"/><path d="M10.8 11.2 H13.4 V9.2 L16.0 12 L13.4 14.8 V12.8 H10.8Z" fill="#8493ad"/></svg></div>
<div style="left:80.47px;top:539px;font-size:12px;line-height:12px;color:#5e5e5e;letter-spacing:0.41px;">UDP</div>
<div style="left:47px;top:562px;width:7px;height:7px;border:1px solid #d3d3d3;background:#fff;"></div><div style="left:49px;top:566px;width:5px;height:1px;background:#a8a8a8;"></div><div style="left:51px;top:564px;width:1px;height:5px;background:#a8a8a8;"></div>
<div style="left:57px;top:566px;width:5px;height:1px;background-image:linear-gradient(90deg,#c4c4c4 50%, transparent 50%);background-size:2px 1px"></div>
<div style="left:63px;top:557px;width:16px;height:16px"><svg width="16" height="16" viewBox="0 0 16 16" ><defs><clipPath id="ghDAV"><rect x="0" y="0" width="16" height="8.7"/></clipPath></defs><g clip-path="url(#ghDAV)"><circle cx="8" cy="8.7" r="8" fill="#8493ad"/><g fill="#fff"><rect x="1.8" y="5.6" width="2.6" height="1.8"/><rect x="5.4" y="5.6" width="2.1" height="1.8"/><rect x="8.5" y="5.6" width="2.1" height="1.8"/><rect x="11.6" y="5.6" width="2.6" height="1.8"/><path d="M2.6 4.5 L5.4 1.6 V4.5Z M6.4 4.5 V1 H7.5 V4.5Z M8.5 4.5 V1 H9.6 V4.5Z M10.6 4.5 V1.6 L13.4 4.5Z"/></g></g><rect x="0" y="7.7" width="16" height="1" fill="#8493ad"/><text x="8" y="15.9" font-size="7.2" font-weight="bold" fill="#8493ad" text-anchor="middle" font-family="Liberation Sans" letter-spacing="-0.3">DAV</text></svg></div>
<div style="left:81.35px;top:559px;font-size:12px;line-height:12px;color:#5e5e5e;letter-spacing:-0.3px;">WEBDAV</div>
<div style="left:47px;top:582px;width:7px;height:7px;border:1px solid #d3d3d3;background:#fff;"></div><div style="left:49px;top:586px;width:5px;height:1px;background:#a8a8a8;"></div><div style="left:51px;top:584px;width:1px;height:5px;background:#a8a8a8;"></div>
<div style="left:57px;top:586px;width:5px;height:1px;background-image:linear-gradient(90deg,#c4c4c4 50%, transparent 50%);background-size:2px 1px"></div>
<div style="left:63px;top:577px;width:16px;height:16px"><svg width="16" height="16" viewBox="0 0 16 16" ><defs><clipPath id="ghWS"><rect x="0" y="0" width="16" height="8.7"/></clipPath></defs><g clip-path="url(#ghWS)"><circle cx="8" cy="8.7" r="8" fill="#8493ad"/><g fill="#fff"><rect x="1.8" y="5.6" width="2.6" height="1.8"/><rect x="5.4" y="5.6" width="2.1" height="1.8"/><rect x="8.5" y="5.6" width="2.1" height="1.8"/><rect x="11.6" y="5.6" width="2.6" height="1.8"/><path d="M2.6 4.5 L5.4 1.6 V4.5Z M6.4 4.5 V1 H7.5 V4.5Z M8.5 4.5 V1 H9.6 V4.5Z M10.6 4.5 V1.6 L13.4 4.5Z"/></g></g><rect x="0" y="7.7" width="16" height="1" fill="#8493ad"/><text x="8" y="15.9" font-size="7.2" font-weight="bold" fill="#8493ad" text-anchor="middle" font-family="Liberation Sans" letter-spacing="-0.3">WS</text></svg></div>
<div style="left:81.35px;top:579px;font-size:12px;line-height:12px;color:#5e5e5e;letter-spacing:-0.46px;">WEB_SERVICE</div>
<div style="left:29px;top:602px;width:7px;height:7px;border:1px solid #d3d3d3;background:#fff;"></div><div style="left:31px;top:606px;width:5px;height:1px;background:#a8a8a8;"></div><div style="left:33px;top:604px;width:1px;height:5px;background:#a8a8a8;"></div>
<div style="left:39px;top:606px;width:6px;height:1px;background-image:linear-gradient(90deg,#c4c4c4 50%, transparent 50%);background-size:2px 1px"></div>
<div style="left:45px;top:597px"><svg width="16" height="16" viewBox="0 0 16 16" ><rect x="0" y="0" width="16" height="16" rx="3" fill="#7a9de0"/><rect x="2.2" y="3.2" width="11.6" height="10.6" fill="#fff"/><rect x="4.4" y="5.4" width="9.4" height="1.2" fill="#7a9de0"/><rect x="4.4" y="7.6" width="9.4" height="1.2" fill="#7a9de0"/><rect x="4.4" y="9.8" width="9.4" height="1.2" fill="#7a9de0"/><rect x="4.4" y="12" width="9.4" height="1" fill="#7a9de0"/><rect x="2.2" y="5.4" width="1.2" height="1.2" fill="#7a9de0"/><rect x="2.2" y="7.6" width="1.2" height="1.2" fill="#7a9de0"/><rect x="2.2" y="9.8" width="1.2" height="1.2" fill="#7a9de0"/><rect x="2.2" y="12" width="1.2" height="1" fill="#7a9de0"/></svg></div>
<div class="k" style="left:62.37px;top:596px;font-size:16.25px;line-height:16.25px;color:#4a4a4a;">클러스터</div>
<div style="left:111.63px;top:600px;font-size:12px;line-height:12px;color:#4a4a4a;letter-spacing:-0.73px;">001</div>
<div style="left:254px;top:95px;width:8px;height:683px;background:#e1e1e1;"></div>
<div style="left:254px;top:567px;width:8px;height:50px;background:#ececec;"></div>
<div style="left:254px;top:567px;width:8px;height:1px;background:#d9d9d9;"></div>
<div style="left:254px;top:616px;width:8px;height:1px;background:#d9d9d9;"></div>
<div style="left:254px;top:587px;width:8px;height:1px;background:#5a5a5a;"></div>
<div style="left:254px;top:589px;width:8px;height:1px;background:#5a5a5a;"></div>
<div style="left:254px;top:591px;width:8px;height:1px;background:#5a5a5a;"></div>
<div style="left:254px;top:593px;width:8px;height:1px;background:#5a5a5a;"></div>
<div style="left:254px;top:595px;width:8px;height:1px;background:#5a5a5a;"></div>
<div style="left:254px;top:597px;width:8px;height:1px;background:#5a5a5a;"></div>
<div style="left:262px;top:95px;width:1091px;height:39px;background:#f0f3f8;"></div>
<div style="left:262px;top:134px;width:1091px;height:1px;background:#cfd6e0;"></div>
<div class="k" style="left:280.67px;top:107px;font-size:20.25px;line-height:20.25px;color:#3e4a5c;font-weight:bold;">전체</div>
<div style="left:1005px;top:111px"><svg width="10" height="10" viewBox="0 0 10 10"><rect x="0.5" y="0.5" width="9" height="9" fill="none" stroke="#aaa"/><rect x="2" y="2.5" width="1" height="1" fill="#aaa"/><rect x="4" y="2.5" width="4" height="1" fill="#aaa"/><rect x="2" y="4.5" width="1" height="1" fill="#aaa"/><rect x="4" y="4.5" width="4" height="1" fill="#aaa"/><rect x="2" y="6.5" width="1" height="1" fill="#aaa"/><rect x="4" y="6.5" width="4" height="1" fill="#aaa"/></svg></div>
<div class="k" style="left:1018.37px;top:109px;font-size:15.25px;line-height:15.25px;color:#111;font-weight:bold;">어댑터 목록</div>
<div style="left:1098px;top:111px"><svg width="10" height="10" viewBox="0 0 10 10"><rect x="0.5" y="0.5" width="9" height="9" fill="none" stroke="#aaa"/><rect x="2" y="2.5" width="1" height="1" fill="#aaa"/><rect x="4" y="2.5" width="4" height="1" fill="#aaa"/><rect x="2" y="4.5" width="1" height="1" fill="#aaa"/><rect x="4" y="4.5" width="4" height="1" fill="#aaa"/><rect x="2" y="6.5" width="1" height="1" fill="#aaa"/><rect x="4" y="6.5" width="4" height="1" fill="#aaa"/></svg></div>
<div class="k" style="left:1112.4px;top:109px;font-size:15px;line-height:15px;color:#9a9a9a;">엔드포인트 그룹 목록</div>
<div style="left:1240px;top:111px"><svg width="10" height="10" viewBox="0 0 10 10"><rect x="0.5" y="0.5" width="9" height="9" fill="none" stroke="#aaa"/><rect x="2" y="2.5" width="1" height="1" fill="#aaa"/><rect x="4" y="2.5" width="4" height="1" fill="#aaa"/><rect x="2" y="4.5" width="1" height="1" fill="#aaa"/><rect x="4" y="4.5" width="4" height="1" fill="#aaa"/><rect x="2" y="6.5" width="1" height="1" fill="#aaa"/><rect x="4" y="6.5" width="4" height="1" fill="#aaa"/></svg></div>
<div class="k" style="left:1254.5px;top:109px;font-size:15px;line-height:15px;color:#9a9a9a;">엔드포인트 목록</div>
<div style="left:1088px;top:107px;width:1px;height:12px;background:#d6d9de;"></div>
<div style="left:1230px;top:107px;width:1px;height:12px;background:#d6d9de;"></div>
<div class="k" style="left:280.97px;top:158px;font-size:19.25px;line-height:19.25px;color:#555;font-weight:bold;">어댑터 목록</div>
<div class="k" style="left:465.87px;top:187px;font-size:16.25px;line-height:16.25px;color:#666;">업무시스템 이름</div>
<div class="k" style="left:721.37px;top:187px;font-size:16.25px;line-height:16.25px;color:#666;">어댑터 종류</div>
<div style="left:565px;top:180px;width:145px;height:26px;border:1px solid #c2cad7;background:#fff;border-radius:2px;"></div>
<svg style="position:absolute;left:694px;top:191px" width="9" height="6" viewBox="0 0 9 6"><path d="M0 0H9L4.5 5.5Z" fill="#9aa4b4"/></svg>
<div style="left:796px;top:180px;width:145px;height:26px;border:1px solid #c2cad7;background:#fff;border-radius:2px;"></div>
<svg style="position:absolute;left:925px;top:191px" width="9" height="6" viewBox="0 0 9 6"><path d="M0 0H9L4.5 5.5Z" fill="#9aa4b4"/></svg>
<div style="left:963px;top:180px;width:145px;height:26px;border:1px solid #c2cad7;background:#fff;border-radius:2px;"></div>
<svg style="position:absolute;left:1092px;top:191px" width="9" height="6" viewBox="0 0 9 6"><path d="M0 0H9L4.5 5.5Z" fill="#9aa4b4"/></svg>
<div class="k" style="left:570.12px;top:188px;font-size:17.75px;line-height:17.75px;color:#555;">전체</div>
<div class="k" style="left:801.12px;top:188px;font-size:17.75px;line-height:17.75px;color:#555;">전체</div>
<div class="k" style="left:969.42px;top:189px;font-size:15.75px;line-height:15.75px;color:#666;">어댑터 아이디</div>
<div style="left:1044px;top:191px;font-size:12.5px;line-height:12.5px;color:#666;">/</div>
<div class="k" style="left:1048.87px;top:188px;font-size:16.25px;line-height:16.25px;color:#666;">이름</div>
<div style="left:1110px;top:180px;width:133px;height:26px;border:1px solid #c2cad7;background:#fff;border-radius:2px;"></div>
<div style="left:1255px;top:180px;width:79px;height:26px;border:1px solid #5a8fd6;background:#fff;border-radius:2px;"></div>
<svg style="position:absolute;left:1271px;top:185px" width="18" height="18" viewBox="0 0 18 18"><circle cx="7" cy="7" r="5.5" fill="none" stroke="#5a8fd6" stroke-width="2"/><path d="M11 11L16.5 16.5" stroke="#5a8fd6" stroke-width="2.4"/></svg>
<div class="k" style="left:1294.85px;top:189px;font-size:17.5px;line-height:17.5px;color:#555;font-weight:bold;">검색</div>
<div style="left:282px;top:215px;width:1055px;height:33px;background:#f0f4fb;"></div>
<div style="left:282px;top:215px;width:1055px;height:1px;background:#dfe6f0;"></div>
<div style="left:282px;top:248px;width:1055px;height:1px;background:#c3cedd;"></div>
<div style="left:282px;top:281px;width:205px;height:32px;background:#fafafa;"></div>
<div style="left:522px;top:281px;width:127px;height:32px;background:#fafafa;"></div>
<div style="left:686px;top:281px;width:651px;height:32px;background:#fafafa;"></div>
<div style="left:282px;top:345px;width:205px;height:32px;background:#fafafa;"></div>
<div style="left:522px;top:345px;width:127px;height:32px;background:#fafafa;"></div>
<div style="left:686px;top:345px;width:651px;height:32px;background:#fafafa;"></div>
<div style="left:282px;top:409px;width:205px;height:32px;background:#fafafa;"></div>
<div style="left:522px;top:409px;width:127px;height:32px;background:#fafafa;"></div>
<div style="left:686px;top:409px;width:651px;height:32px;background:#fafafa;"></div>
<div style="left:282px;top:473px;width:205px;height:32px;background:#fafafa;"></div>
<div style="left:522px;top:473px;width:127px;height:32px;background:#fafafa;"></div>
<div style="left:686px;top:473px;width:651px;height:32px;background:#fafafa;"></div>
<div style="left:282px;top:537px;width:205px;height:32px;background:#fafafa;"></div>
<div style="left:522px;top:537px;width:127px;height:32px;background:#fafafa;"></div>
<div style="left:686px;top:537px;width:651px;height:32px;background:#fafafa;"></div>
<div style="left:282px;top:601px;width:205px;height:32px;background:#fafafa;"></div>
<div style="left:522px;top:601px;width:127px;height:32px;background:#fafafa;"></div>
<div style="left:686px;top:601px;width:651px;height:32px;background:#fafafa;"></div>
<div style="left:282px;top:665px;width:205px;height:32px;background:#fafafa;"></div>
<div style="left:522px;top:665px;width:127px;height:32px;background:#fafafa;"></div>
<div style="left:686px;top:665px;width:651px;height:32px;background:#fafafa;"></div>
<div style="left:327px;top:215px;width:1px;height:514px;background:#dce4f0;"></div>
<div style="left:377px;top:215px;width:1px;height:514px;background:#dce4f0;"></div>
<div style="left:527px;top:215px;width:1px;height:514px;background:#dce4f0;"></div>
<div style="left:702px;top:215px;width:1px;height:514px;background:#dce4f0;"></div>
<div style="left:868px;top:215px;width:1px;height:514px;background:#dce4f0;"></div>
<div style="left:988px;top:215px;width:1px;height:514px;background:#dce4f0;"></div>
<div style="left:1152px;top:215px;width:1px;height:514px;background:#dce4f0;"></div>
<div style="left:282px;top:729px;width:1055px;height:1px;background:#dce4f0;"></div>
<div style="left:298px;top:227px;width:10px;height:10px;border:1px solid #a4a4a4;border-radius:2px;background:linear-gradient(#f4f4f4,#dcdcdc)"></div>
<div style="left:336.83px;top:227px;font-size:13px;line-height:13px;color:#555;font-weight:bold;letter-spacing:0.15px;">No</div>
<div class="k" style="left:386.07px;top:226px;font-size:16.25px;line-height:16.25px;color:#555;font-weight:bold;">업무시스템 이름</div>
<div class="k" style="left:535.95px;top:226px;font-size:16.5px;line-height:16.5px;color:#555;font-weight:bold;">어댑터 종류</div>
<div class="k" style="left:710.92px;top:227px;font-size:16.75px;line-height:16.75px;color:#555;font-weight:bold;">어댑터 이름</div>
<div class="k" style="left:876.75px;top:226px;font-size:17.5px;line-height:17.5px;color:#555;font-weight:bold;">버전</div>
<div class="k" style="left:996.35px;top:226px;font-size:16.5px;line-height:16.5px;color:#555;font-weight:bold;">최종 변경일자</div>
<div class="k" style="left:1160.87px;top:226px;font-size:17.25px;line-height:17.25px;color:#555;font-weight:bold;">담당자</div>
<svg style="position:absolute;left:688px;top:225px" width="9" height="15" viewBox="0 0 9 15"><path d="M4.5 0L8.5 6H0.5Z M0.5 9H8.5L4.5 15Z" fill="#d4d4d4"/></svg>
<svg style="position:absolute;left:854px;top:225px" width="9" height="15" viewBox="0 0 9 15"><path d="M4.5 0L8.5 6H0.5Z M0.5 9H8.5L4.5 15Z" fill="#d4d4d4"/></svg>
<div style="left:298px;top:261px;width:10px;height:10px;border:1px solid #a4a4a4;border-radius:2px;background:linear-gradient(#f4f4f4,#dcdcdc)"></div>
<div style="left:347.42px;top:262px;font-size:12.5px;line-height:12.5px;color:#555;">1</div>
<div style="left:387.78px;top:262px;font-size:12.5px;line-height:12.5px;color:#555;letter-spacing:-0.48px;">ANL001</div>
<div style="left:537.05px;top:262px;font-size:12.5px;line-height:12.5px;color:#555;letter-spacing:-0.39px;">ISO8583</div>
<div style="left:711.45px;top:262px;font-size:12.5px;line-height:12.5px;color:#555;letter-spacing:-0.74px;">ISO8583_ADT</div>
<div style="left:923.22px;top:262px;font-size:12.5px;line-height:12.5px;color:#555;">1</div>
<div style="left:998.37px;top:262px;font-size:12.5px;line-height:12.5px;color:#555;letter-spacing:-0.29px;">2019-03-14 18:20:44</div>
<div style="left:1162.67px;top:262px;font-size:12.5px;line-height:12.5px;color:#555;letter-spacing:0.07px;">admin(admin)</div>
<div style="left:298px;top:293px;width:10px;height:10px;border:1px solid #a4a4a4;border-radius:2px;background:linear-gradient(#f4f4f4,#dcdcdc)"></div>
<div style="left:347.74px;top:294px;font-size:12.5px;line-height:12.5px;color:#555;">2</div>
<div style="left:387.78px;top:294px;font-size:12.5px;line-height:12.5px;color:#555;letter-spacing:-0.48px;">ANL001</div>
<div style="left:537.17px;top:294px;font-size:12.5px;line-height:12.5px;color:#555;letter-spacing:-0.07px;">ProObject</div>
<div style="left:711.57px;top:294px;font-size:12.5px;line-height:12.5px;color:#555;letter-spacing:-0.43px;">ProObject_ADT</div>
<div style="left:923.54px;top:294px;font-size:12.5px;line-height:12.5px;color:#555;">2</div>
<div style="left:998.37px;top:294px;font-size:12.5px;line-height:12.5px;color:#555;letter-spacing:-0.29px;">2019-05-29 18:08:24</div>
<div style="left:1162.67px;top:294px;font-size:12.5px;line-height:12.5px;color:#555;letter-spacing:0.07px;">admin(admin)</div>
<div style="left:298px;top:325px;width:10px;height:10px;border:1px solid #a4a4a4;border-radius:2px;background:linear-gradient(#f4f4f4,#dcdcdc)"></div>
<div style="left:347.89px;top:326px;font-size:12.5px;line-height:12.5px;color:#555;">3</div>
<div style="left:387.78px;top:326px;font-size:12.5px;line-height:12.5px;color:#555;letter-spacing:-0.48px;">ANL001</div>
<div style="left:537.92px;top:326px;font-size:12.5px;line-height:12.5px;color:#555;letter-spacing:-1.75px;">TCP</div>
<div style="left:712.32px;top:326px;font-size:12.5px;line-height:12.5px;color:#555;letter-spacing:-1.51px;">TCP_ADT_TEST</div>
<div style="left:923.22px;top:326px;font-size:12.5px;line-height:12.5px;color:#555;">1</div>
<div style="left:998.37px;top:326px;font-size:12.5px;line-height:12.5px;color:#555;letter-spacing:-0.28px;">2019-02-25 10:18:15</div>
<div style="left:1162.67px;top:326px;font-size:12.5px;line-height:12.5px;color:#555;letter-spacing:0.07px;">admin(admin)</div>
<div style="left:298px;top:357px;width:10px;height:10px;border:1px solid #a4a4a4;border-radius:2px;background:linear-gradient(#f4f4f4,#dcdcdc)"></div>
<div style="left:348.08px;top:358px;font-size:12.5px;line-height:12.5px;color:#555;">4</div>
<div style="left:387.78px;top:358px;font-size:12.5px;line-height:12.5px;color:#555;letter-spacing:-0.48px;">ANL001</div>
<div style="left:537.17px;top:358px;font-size:12.5px;line-height:12.5px;color:#555;letter-spacing:-1.24px;">FTP</div>
<div style="left:711.57px;top:358px;font-size:12.5px;line-height:12.5px;color:#555;letter-spacing:-1.35px;">RA_FTP_ADT</div>
<div style="left:923.22px;top:358px;font-size:12.5px;line-height:12.5px;color:#555;">1</div>
<div style="left:998.37px;top:358px;font-size:12.5px;line-height:12.5px;color:#555;letter-spacing:-0.28px;">2019-01-04 18:34:36</div>
<div style="left:1162.67px;top:358px;font-size:12.5px;line-height:12.5px;color:#555;letter-spacing:0.07px;">admin(admin)</div>
<div style="left:298px;top:389px;width:10px;height:10px;border:1px solid #a4a4a4;border-radius:2px;background:linear-gradient(#f4f4f4,#dcdcdc)"></div>
<div style="left:347.87px;top:390px;font-size:12.5px;line-height:12.5px;color:#555;">5</div>
<div style="left:387.78px;top:390px;font-size:12.5px;line-height:12.5px;color:#555;letter-spacing:-0.48px;">ANL001</div>
<div style="left:537.92px;top:390px;font-size:12.5px;line-height:12.5px;color:#555;letter-spacing:-1.75px;">TCP</div>
<div style="left:712.32px;top:390px;font-size:12.5px;line-height:12.5px;color:#555;letter-spacing:-1.28px;">TCP_OUT_ADT</div>
<div style="left:923.22px;top:390px;font-size:12.5px;line-height:12.5px;color:#555;">1</div>
<div style="left:998.37px;top:390px;font-size:12.5px;line-height:12.5px;color:#555;letter-spacing:-0.28px;">2018-12-14 14:53:33</div>
<div style="left:1162.67px;top:390px;font-size:12.5px;line-height:12.5px;color:#555;letter-spacing:0.07px;">admin(admin)</div>
<div style="left:298px;top:421px;width:10px;height:10px;border:1px solid #a4a4a4;border-radius:2px;background:linear-gradient(#f4f4f4,#dcdcdc)"></div>
<div style="left:347.74px;top:422px;font-size:12.5px;line-height:12.5px;color:#555;">6</div>
<div style="left:387.78px;top:422px;font-size:12.5px;line-height:12.5px;color:#555;letter-spacing:-0.48px;">ANL001</div>
<div style="left:537.92px;top:422px;font-size:12.5px;line-height:12.5px;color:#555;letter-spacing:-1.75px;">TCP</div>
<div style="left:712.32px;top:422px;font-size:12.5px;line-height:12.5px;color:#555;letter-spacing:-1.21px;">TCP_IN_ADT</div>
<div style="left:923.22px;top:422px;font-size:12.5px;line-height:12.5px;color:#555;">1</div>
<div style="left:998.37px;top:422px;font-size:12.5px;line-height:12.5px;color:#555;letter-spacing:-0.27px;">2018-12-14 14:42:31</div>
<div style="left:1162.67px;top:422px;font-size:12.5px;line-height:12.5px;color:#555;letter-spacing:0.07px;">admin(admin)</div>
<div style="left:298px;top:453px;width:10px;height:10px;border:1px solid #a4a4a4;border-radius:2px;background:linear-gradient(#f4f4f4,#dcdcdc)"></div>
<div style="left:347.73px;top:454px;font-size:12.5px;line-height:12.5px;color:#555;">7</div>
<div style="left:387.78px;top:454px;font-size:12.5px;line-height:12.5px;color:#555;letter-spacing:-0.48px;">ANL001</div>
<div style="left:537.63px;top:454px;font-size:12.5px;line-height:12.5px;color:#555;letter-spacing:-1.51px;">SAP</div>
<div style="left:712.03px;top:454px;font-size:12.5px;line-height:12.5px;color:#555;letter-spacing:-1.36px;">SAP_ADT</div>
<div style="left:923.22px;top:454px;font-size:12.5px;line-height:12.5px;color:#555;">1</div>
<div style="left:998.37px;top:454px;font-size:12.5px;line-height:12.5px;color:#555;letter-spacing:-0.28px;">2018-12-13 15:43:18</div>
<div style="left:1162.67px;top:454px;font-size:12.5px;line-height:12.5px;color:#555;letter-spacing:0.07px;">admin(admin)</div>
<div style="left:298px;top:485px;width:10px;height:10px;border:1px solid #a4a4a4;border-radius:2px;background:linear-gradient(#f4f4f4,#dcdcdc)"></div>
<div style="left:347.83px;top:486px;font-size:12.5px;line-height:12.5px;color:#555;">8</div>
<div style="left:387.78px;top:486px;font-size:12.5px;line-height:12.5px;color:#555;letter-spacing:-0.48px;">ANL001</div>
<div style="left:537.17px;top:486px;font-size:12.5px;line-height:12.5px;color:#555;letter-spacing:-0.75px;">HTTP</div>
<div style="left:711.57px;top:486px;font-size:12.5px;line-height:12.5px;color:#555;letter-spacing:-0.56px;">HTTP_ADT_Tutorial</div>
<div style="left:923.22px;top:486px;font-size:12.5px;line-height:12.5px;color:#555;">1</div>
<div style="left:998.37px;top:486px;font-size:12.5px;line-height:12.5px;color:#555;letter-spacing:-0.27px;">2018-12-11 17:27:32</div>
<div style="left:1162.67px;top:486px;font-size:12.5px;line-height:12.5px;color:#555;letter-spacing:0.07px;">admin(admin)</div>
<div style="left:298px;top:517px;width:10px;height:10px;border:1px solid #a4a4a4;border-radius:2px;background:linear-gradient(#f4f4f4,#dcdcdc)"></div>
<div style="left:347.78px;top:518px;font-size:12.5px;line-height:12.5px;color:#555;">9</div>
<div style="left:387.78px;top:518px;font-size:12.5px;line-height:12.5px;color:#555;letter-spacing:-0.48px;">ANL001</div>
<div style="left:537.92px;top:518px;font-size:12.5px;line-height:12.5px;color:#555;letter-spacing:-0.52px;">Tmax</div>
<div style="left:712.32px;top:518px;font-size:12.5px;line-height:12.5px;color:#555;letter-spacing:-1.1px;">TMAX_OUT_ADT</div>
<div style="left:923.22px;top:518px;font-size:12.5px;line-height:12.5px;color:#555;">1</div>
<div style="left:998.37px;top:518px;font-size:12.5px;line-height:12.5px;color:#555;letter-spacing:-0.28px;">2018-12-11 14:44:46</div>
<div style="left:1162.67px;top:518px;font-size:12.5px;line-height:12.5px;color:#555;letter-spacing:0.07px;">admin(admin)</div>
<div style="left:298px;top:549px;width:10px;height:10px;border:1px solid #a4a4a4;border-radius:2px;background:linear-gradient(#f4f4f4,#dcdcdc)"></div>
<div style="left:344.09px;top:550px;font-size:12.5px;line-height:12.5px;color:#555;letter-spacing:0.85px;">10</div>
<div style="left:387.78px;top:550px;font-size:12.5px;line-height:12.5px;color:#555;letter-spacing:-0.48px;">ANL001</div>
<div style="left:537.92px;top:550px;font-size:12.5px;line-height:12.5px;color:#555;letter-spacing:-0.52px;">Tmax</div>
<div style="left:712.32px;top:550px;font-size:12.5px;line-height:12.5px;color:#555;letter-spacing:-1.01px;">TMAX_IN_ADT</div>
<div style="left:923.22px;top:550px;font-size:12.5px;line-height:12.5px;color:#555;">1</div>
<div style="left:998.37px;top:550px;font-size:12.5px;line-height:12.5px;color:#555;letter-spacing:-0.27px;">2018-12-11 14:43:47</div>
<div style="left:1162.67px;top:550px;font-size:12.5px;line-height:12.5px;color:#555;letter-spacing:0.07px;">admin(admin)</div>
<div style="left:298px;top:581px;width:10px;height:10px;border:1px solid #a4a4a4;border-radius:2px;background:linear-gradient(#f4f4f4,#dcdcdc)"></div>
<div style="left:344.09px;top:582px;font-size:12.5px;line-height:12.5px;color:#555;letter-spacing:0.97px;">11</div>
<div style="left:387.78px;top:582px;font-size:12.5px;line-height:12.5px;color:#555;letter-spacing:-0.48px;">ANL001</div>
<div style="left:537.17px;top:582px;font-size:12.5px;line-height:12.5px;color:#555;letter-spacing:-1.24px;">FTP</div>
<div style="left:711.57px;top:582px;font-size:12.5px;line-height:12.5px;color:#555;letter-spacing:-1.18px;">FTP_OUT_ADT</div>
<div style="left:923.22px;top:582px;font-size:12.5px;line-height:12.5px;color:#555;">1</div>
<div style="left:998.37px;top:582px;font-size:12.5px;line-height:12.5px;color:#555;letter-spacing:-0.28px;">2018-12-11 10:34:35</div>
<div style="left:1162.67px;top:582px;font-size:12.5px;line-height:12.5px;color:#555;letter-spacing:0.07px;">admin(admin)</div>
<div style="left:298px;top:613px;width:10px;height:10px;border:1px solid #a4a4a4;border-radius:2px;background:linear-gradient(#f4f4f4,#dcdcdc)"></div>
<div style="left:344.09px;top:614px;font-size:12.5px;line-height:12.5px;color:#555;letter-spacing:0.99px;">12</div>
<div style="left:387.78px;top:614px;font-size:12.5px;line-height:12.5px;color:#555;letter-spacing:-0.48px;">ANL001</div>
<div style="left:538.15px;top:614px;font-size:12.5px;line-height:12.5px;color:#555;letter-spacing:-0.45px;">WebService</div>
<div style="left:712.55px;top:614px;font-size:12.5px;line-height:12.5px;color:#555;letter-spacing:-0.64px;">WS_ADT_Tutorial</div>
<div style="left:923.22px;top:614px;font-size:12.5px;line-height:12.5px;color:#555;">1</div>
<div style="left:998.37px;top:614px;font-size:12.5px;line-height:12.5px;color:#555;letter-spacing:-0.28px;">2018-12-10 16:44:56</div>
<div style="left:1162.67px;top:614px;font-size:12.5px;line-height:12.5px;color:#555;letter-spacing:0.07px;">admin(admin)</div>
<div style="left:298px;top:645px;width:10px;height:10px;border:1px solid #a4a4a4;border-radius:2px;background:linear-gradient(#f4f4f4,#dcdcdc)"></div>
<div style="left:344.09px;top:646px;font-size:12.5px;line-height:12.5px;color:#555;letter-spacing:0.91px;">13</div>
<div style="left:387.78px;top:646px;font-size:12.5px;line-height:12.5px;color:#555;letter-spacing:-0.48px;">ANL001</div>
<div style="left:537.17px;top:646px;font-size:12.5px;line-height:12.5px;color:#555;letter-spacing:-1.02px;">FILE</div>
<div style="left:711.57px;top:646px;font-size:12.5px;line-height:12.5px;color:#555;letter-spacing:-1.11px;">FILE_OUT_ADT</div>
<div style="left:923.22px;top:646px;font-size:12.5px;line-height:12.5px;color:#555;">1</div>
<div style="left:998.37px;top:646px;font-size:12.5px;line-height:12.5px;color:#555;letter-spacing:-0.27px;">2018-12-07 17:04:27</div>
<div style="left:1162.67px;top:646px;font-size:12.5px;line-height:12.5px;color:#555;letter-spacing:0.07px;">admin(admin)</div>
<div style="left:298px;top:677px;width:10px;height:10px;border:1px solid #a4a4a4;border-radius:2px;background:linear-gradient(#f4f4f4,#dcdcdc)"></div>
<div style="left:344.09px;top:678px;font-size:12.5px;line-height:12.5px;color:#555;letter-spacing:0.72px;">14</div>
<div style="left:387.78px;top:678px;font-size:12.5px;line-height:12.5px;color:#555;letter-spacing:-0.48px;">ANL001</div>
<div style="left:537.17px;top:678px;font-size:12.5px;line-height:12.5px;color:#555;letter-spacing:0.35px;">DB</div>
<div style="left:711.57px;top:678px;font-size:12.5px;line-height:12.5px;color:#555;letter-spacing:-0.99px;">DB_OUT_ADT</div>
<div style="left:923.54px;top:678px;font-size:12.5px;line-height:12.5px;color:#555;">2</div>
<div style="left:998.37px;top:678px;font-size:12.5px;line-height:12.5px;color:#555;letter-spacing:-0.28px;">2019-04-18 20:14:19</div>
<div style="left:1162.67px;top:678px;font-size:12.5px;line-height:12.5px;color:#555;letter-spacing:0.07px;">admin(admin)</div>
<div style="left:298px;top:709px;width:10px;height:10px;border:1px solid #a4a4a4;border-radius:2px;background:linear-gradient(#f4f4f4,#dcdcdc)"></div>
<div style="left:344.09px;top:710px;font-size:12.5px;line-height:12.5px;color:#555;letter-spacing:0.88px;">15</div>
<div style="left:387.78px;top:710px;font-size:12.5px;line-height:12.5px;color:#555;letter-spacing:-0.48px;">ANL001</div>
<div style="left:537.17px;top:710px;font-size:12.5px;line-height:12.5px;color:#555;letter-spacing:1.06px;">MQ</div>
<div style="left:711.57px;top:710px;font-size:12.5px;line-height:12.5px;color:#555;letter-spacing:-0.81px;">MQ_ADT</div>
<div style="left:923.22px;top:710px;font-size:12.5px;line-height:12.5px;color:#555;">1</div>
<div style="left:998.37px;top:710px;font-size:12.5px;line-height:12.5px;color:#555;letter-spacing:-0.28px;">2018-08-31 15:08:15</div>
<div style="left:1162.67px;top:710px;font-size:12.5px;line-height:12.5px;color:#555;letter-spacing:0.07px;">admin(admin)</div>
<div style="left:282px;top:740px;width:61px;height:24px;border:1px solid #cfcfcf;background:#fff;border-radius:2px;"></div>
<div style="left:350px;top:740px;width:57px;height:24px;border:1px solid #cfcfcf;background:#fff;border-radius:2px;"></div>
<div style="left:413px;top:740px;width:65px;height:24px;border:1px solid #cfcfcf;background:#fff;border-radius:2px;"></div>
<div style="left:484px;top:740px;width:64px;height:24px;border:1px solid #cfcfcf;background:#fff;border-radius:2px;"></div>
<div style="left:554px;top:740px;width:76px;height:24px;border:1px solid #cfcfcf;background:#fff;border-radius:2px;"></div>
<svg style="position:absolute;left:293px;top:747px" width="11" height="11" viewBox="0 0 11 11"><rect x="4.2" y="0" width="2.6" height="11" fill="#8b9bb2"/><rect x="0" y="4.2" width="11" height="2.6" fill="#8b9bb2"/></svg>
<div style="left:361px;top:751px;width:12px;height:3px;background:#8b9bb2;"></div>
<svg style="position:absolute;left:425px;top:747px" width="10" height="11" viewBox="0 0 10 11"><path d="M0 0L10 5.5L0 11Z" fill="#8b9bb2"/></svg>
<div style="left:496px;top:748px;width:9px;height:9px;background:#8b9bb2;"></div>
<svg style="position:absolute;left:565px;top:747px" width="14" height="11" viewBox="0 0 14 11"><path d="M6 0H8V4.5H10.5L7 8L3.5 4.5H6Z" fill="#8b9bb2"/><path d="M1 6.5V9.7H13V6.5" stroke="#8b9bb2" stroke-width="1.8" fill="none"/></svg>
<div style="left:311.16px;top:748px;font-size:13.5px;line-height:13.5px;color:#8b9bb2;font-weight:bold;letter-spacing:-1.31px;">Add</div>
<div style="left:378.6px;top:748px;font-size:13.5px;line-height:13.5px;color:#8b9bb2;font-weight:bold;letter-spacing:-0.67px;">Del</div>
<div style="left:441.81px;top:748px;font-size:13.5px;line-height:13.5px;color:#8b9bb2;font-weight:bold;letter-spacing:-0.9px;">Start</div>
<div style="left:513.21px;top:748px;font-size:13.5px;line-height:13.5px;color:#8b9bb2;font-weight:bold;letter-spacing:-1.32px;">Stop</div>
<div style="left:583.3px;top:748px;font-size:13.5px;line-height:13.5px;color:#8b9bb2;font-weight:bold;letter-spacing:-1.02px;">Export</div>
<div style="left:934px;top:740px;width:33px;height:26px;background:#e3e3e3;border-radius:2px;"></div>
<div style="left:973px;top:740px;width:20px;height:26px;background:#e3e3e3;"></div>
<svg style="position:absolute;left:939px;top:746px" width="24" height="11" viewBox="0 0 24 11"><path d="M12 0V11L0 5.5Z M24 0V11L12 5.5Z" fill="#ababab"/></svg>
<svg style="position:absolute;left:978px;top:746px" width="11" height="11" viewBox="0 0 11 11"><path d="M11 0V11L0 5.5Z" fill="#ababab"/></svg>
<div style="left:1003.44px;top:746px;font-size:12px;line-height:12px;color:#1a3ccf;font-weight:bold;">1</div>
<div style="left:1023.96px;top:746px;font-size:12px;line-height:12px;color:#555;">2</div>
<div style="left:1045.2px;top:746px;font-size:12px;line-height:12px;color:#555;">3</div>
<div style="left:1065.9px;top:746px;font-size:12px;line-height:12px;color:#555;">4</div>
<div style="left:1086.97px;top:746px;font-size:12px;line-height:12px;color:#555;">5</div>
<svg style="position:absolute;left:1109px;top:746px" width="11" height="11" viewBox="0 0 11 11"><path d="M0 0V11L10 5.5Z" fill="#98a8bc"/></svg>
<svg style="position:absolute;left:1135px;top:746px" width="23" height="11" viewBox="0 0 23 11"><path d="M0 0V11L11 5.5Z M12 0V11L23 5.5Z" fill="#98a8bc"/></svg>
<div style="left:1172px;top:740px;width:2px;height:26px;background:#e3e3e8;"></div>
<div class="k" style="left:1180.6px;top:748px;font-size:16px;line-height:16px;color:#666;">페이지당 목록 수</div>
<div style="left:1272.31px;top:747px;font-size:13px;line-height:13px;color:#666;">:</div>
<div style="left:1287px;top:740px;width:49px;height:24px;border:1px solid #c2cad7;background:#fff;border-radius:2px;"></div>
<div style="left:1294.71px;top:747px;font-size:13px;line-height:13px;color:#444;letter-spacing:-1.02px;">15</div>
</div>
<script>
(function(){
  var t = document.createElement('span');
  t.style.cssText = 'position:absolute;left:-9999px;top:0;font-size:100px;line-height:100px;white-space:nowrap';
  t.textContent = '\uAC00\uB098\uB2E4\uB77C';
  document.body.appendChild(t);
  var r = t.getBoundingClientRect().width / 400;
  document.body.removeChild(t);
  if (!(r > 0.8)) return;
  var els = document.querySelectorAll('.k');
  for (var i = 0; i < els.length; i++) {
    var el = els[i];
    var m = document.createElement('span');
    m.style.cssText = 'display:inline-block;width:0;height:0;vertical-align:baseline';
    el.appendChild(m);
    var base = m.getBoundingClientRect().top - el.getBoundingClientRect().top;
    el.removeChild(m);
    el.style.webkitTextStroke = '0';
    el.style.transformOrigin = '0 ' + base + 'px';
    var fs = parseFloat(el.style.fontSize) || 16;
    el.style.transform = 'translateY(' + (-0.13 * fs * 0.75 / r) + 'px) scale(' + (0.75 / r) + ')';
  }
})();
</script>
</body></html>
